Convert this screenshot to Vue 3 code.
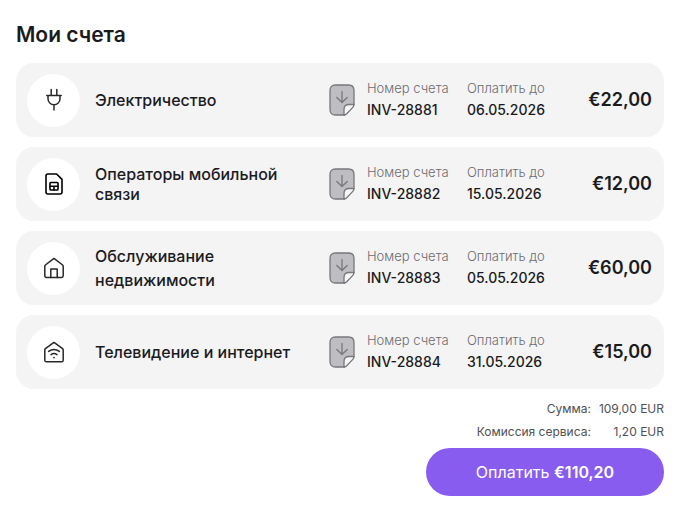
<script setup>
const bills = [
  { icon: 'plug', name: 'Электричество', number: 'INV-28881', due: '06.05.2026', amount: '€22,00' },
  { icon: 'sim', name: 'Операторы мобильной связи', number: 'INV-28882', due: '15.05.2026', amount: '€12,00', compact: true },
  { icon: 'home', name: 'Обслуживание недвижимости', number: 'INV-28883', due: '05.05.2026', amount: '€60,00' },
  { icon: 'wifi', name: 'Телевидение и интернет', number: 'INV-28884', due: '31.05.2026', amount: '€15,00' },
]
</script>

<template>
  <main class="page">
    <h1 class="title">Мои счета</h1>

    <ul class="bills">
      <li v-for="bill in bills" :key="bill.number" class="bill">
        <span class="badge">
          <svg v-if="bill.icon === 'plug'" class="icon" viewBox="0 0 24 24" aria-hidden="true">
            <path d="M9.2 1.500v6M14.8 1.500v6M4.8 7.500h14.4M6 7.500v3.2a6 6 0 0 0 12 0V7.500M12 16.700V22" />
          </svg>
          <svg v-else-if="bill.icon === 'sim'" class="icon dark" viewBox="0 0 24 24" aria-hidden="true">
            <path d="M6 2h8.6l5.4 5.4V20a2 2 0 0 1-2 2H6a2 2 0 0 1-2-2V4a2 2 0 0 1 2-2z" />
            <rect x="8" y="10.5" width="8" height="7.5" rx="0.8" />
            <path d="M8 14.2h8M12 14.2V18" />
          </svg>
          <svg v-else-if="bill.icon === 'home'" class="icon" viewBox="0 0 24 24" aria-hidden="true">
            <path d="M12 2.4 L20.6 9 Q21.2 9.5 21.2 10.4 V19.8 a1.6 1.6 0 0 1-1.6 1.6 H4.4 a1.6 1.6 0 0 1-1.6-1.6 V10.4 Q2.8 9.5 3.4 9 Z" />
            <path d="M8.8 21.400V13h6.400v8.4" />
          </svg>
          <svg v-else class="icon" viewBox="0 0 24 24" aria-hidden="true">
            <path d="M12 2.4 L20.6 8.6 Q21.2 9.1 21.2 10 V20.2 a1.6 1.6 0 0 1-1.6 1.6 H4.4 a1.6 1.6 0 0 1-1.6-1.6 V10 Q2.8 9.1 3.4 8.6 Z" />
            <path d="M6.6 11.400q5.4-4 10.8 0M9 14.600q3-2.2 6 0" />
            <circle class="dot" cx="12" cy="17.6" r="0.9" />
          </svg>
        </span>

        <h2 class="name" :class="{ compact: bill.compact }">{{ bill.name }}</h2>

        <button class="download" type="button" :aria-label="bill.number">
          <svg class="file" viewBox="0 0 26 32" aria-hidden="true">
            <path class="sheet" d="M6.5 1h13Q25 1 25 6.500V20.500L15.500 31H6.500Q1 31 1 25.500V6.500Q1 1 6.500 1z" />
            <path class="fold" d="M25 20.500h-5q-5 0-5 5V31q1.700-.2 2.700-1.200l6.100-6.400q1.200-1.300 1.200-2.900z" />
            <path class="arrow" d="M13 7.500v11M7.800 13.500 13 18.500l5.200-5" />
          </svg>
        </button>

        <dl class="field">
          <dt>Номер счета</dt>
          <dd>{{ bill.number }}</dd>
        </dl>
        <dl class="field">
          <dt>Оплатить до</dt>
          <dd>{{ bill.due }}</dd>
        </dl>

        <strong class="amount">{{ bill.amount }}</strong>
      </li>
    </ul>

    <dl class="totals">
      <dt>Сумма:</dt>
      <dd>109,00 EUR</dd>
      <dt>Комиссия сервиса:</dt>
      <dd>1,20 EUR</dd>
    </dl>

    <button class="pay" type="button">Оплатить <b>€110,20</b></button>
  </main>
</template>

<style>
body {
  background: #fff;
}
</style>

<style scoped>
.page {
  display: flex;
  flex-direction: column;
  padding: 19px 16px 15px;
  font-family: Inter, "Liberation Sans", sans-serif;
  color: #1b1b1e;
}

.title {
  margin: 0 0 12px;
  font-size: 21px;
  line-height: 32px;
  font-weight: 600;
}

.bills {
  display: flex;
  flex-direction: column;
  gap: 10px;
  margin: 0;
  padding: 0;
  list-style: none;
}

.bill {
  display: grid;
  grid-template-columns: 54px 1fr 26px 100px 100px 97px;
  align-items: center;
  min-height: 74px;
  box-sizing: border-box;
  padding: 10px 12px 10px 11px;
  border-radius: 18px;
  background: #f4f4f4;
}

.badge {
  display: grid;
  place-items: center;
  width: 53px;
  height: 53px;
  border-radius: 50%;
  background: #fff;
}

.icon {
  width: 24px;
  height: 24px;
  fill: none;
  stroke: #28282b;
  stroke-width: 1.5;
  stroke-linecap: round;
  stroke-linejoin: round;
}

.icon.dark {
  stroke: #000;
  stroke-width: 1.6;
}

.icon .dot {
  fill: #28282b;
  stroke: none;
}

.name {
  margin: 0;
  padding: 0 32px 0 14px;
  font-size: 16px;
  line-height: 24px;
  font-weight: 500;
}

.name.compact {
  line-height: 20px;
}

.download {
  display: block;
  padding: 0;
  border: 0;
  background: none;
  cursor: pointer;
}

.file {
  display: block;
  width: 26px;
  height: 32px;
  fill: none;
  stroke: #77777c;
  stroke-width: 1.3;
  stroke-linecap: round;
  stroke-linejoin: round;
}

.sheet {
  fill: #bdbdc2;
}

.fold {
  fill: #f8f8f8;
}

.field {
  margin: 0;
  padding-left: 12px;
  white-space: nowrap;
}

.field dt {
  font-size: 13px;
  line-height: 20px;
  font-weight: 300;
  color: #6b6b72;
}

.field dd {
  margin: 0;
  font-size: 14px;
  line-height: 24px;
  font-weight: 500;
}

.amount {
  font-size: 18px;
  line-height: 24px;
  font-weight: 600;
  text-align: right;
}

.totals {
  display: grid;
  grid-template-columns: auto auto;
  justify-content: end;
  column-gap: 8px;
  margin: 8px 0 5px;
  font-size: 12px;
  line-height: 23px;
  color: #505055;
  text-align: right;
}

.totals dd {
  margin: 0;
}

.pay {
  align-self: flex-end;
  min-width: 238px;
  height: 48px;
  border: 0;
  border-radius: 24px;
  background: #885cee;
  color: #fff;
  font-family: inherit;
  font-size: 16px;
  line-height: 24px;
  font-weight: 400;
  cursor: pointer;
}

.pay b {
  font-weight: 600;
}
</style>
